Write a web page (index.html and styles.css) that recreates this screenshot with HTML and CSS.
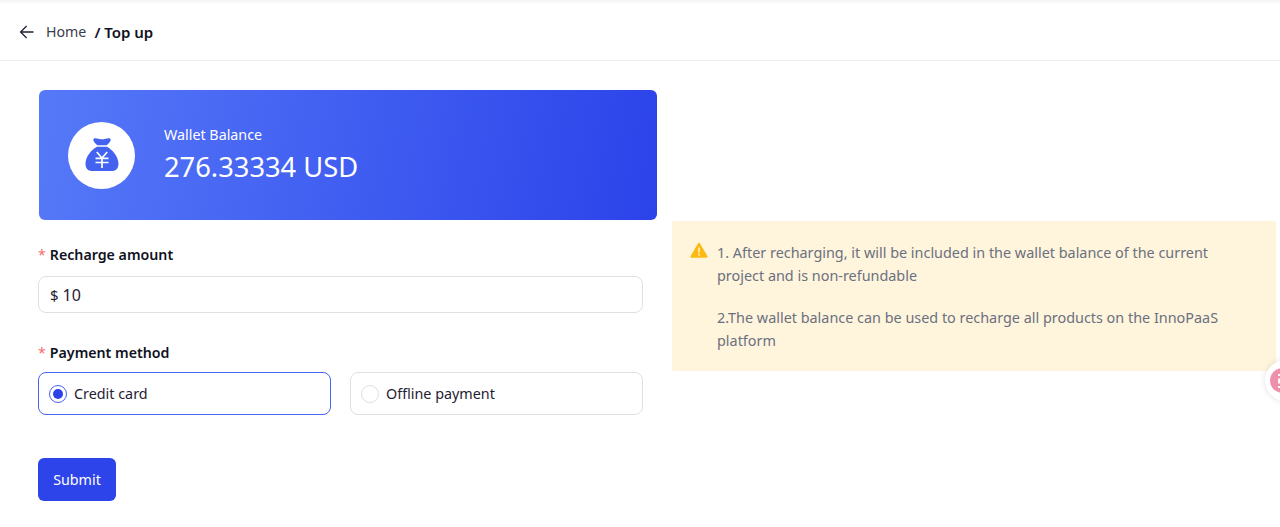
FILE: index.html
```html
<!DOCTYPE html>
<html lang="en">
<head>
  <meta charset="UTF-8" />
  <title>Top up</title>
  <link rel="stylesheet" href="styles.css">
</head>
<body>
  <div class="topbar"></div>
  <div class="header">
    <svg class="back" width="16" height="16" viewBox="0 0 16 16"><path d="M14.5 8H1.8M7.6 2 1.6 8l6 6" fill="none" stroke="#1f2133" stroke-width="1.3"/></svg>
    <span class="crumb">Home</span>
    <span class="crumb-current">/ Top up</span>
  </div>
  <div class="main">
    <div class="left">
      <div class="balance">
        <div class="balance-icon">
          <svg width="36" height="36" viewBox="0 0 36 36">
            <path d="M10 1.500c2-1 5 .8 8 .8s6-1.800 8-.8c1.200.7.6 2.500-.4 3.800-1 1.200-2 2.300-3 3H13.400c-1-.7-2-1.800-3-3-1-1.300-1.600-3.100-.4-3.800z" fill="#4262ef"/>
            <path d="M13 9.800h10c5.500 3 11.500 10 11.500 17 0 4.300-2.400 7.200-6 7.200H7.500c-3.600 0-6-2.900-6-7.200 0-7 6-14 11.500-17z" fill="#4262ef"/>
            <path d="M12.800 15 18 21l5.200-6M11.500 21.300h13M11.500 25.500h13M18 21v10" fill="none" stroke="#fff" stroke-width="1.700"/>
          </svg>
        </div>
        <div class="balance-text">
          <div class="balance-label">Wallet Balance</div>
          <div class="balance-value">276.33334 USD</div>
        </div>
      </div>

      <div class="field amount-field">
        <div class="field-label"><span class="req">*</span>Recharge amount</div>
        <div class="amount-input"><span class="dollar">$</span><span class="amount">10</span></div>
      </div>

      <div class="field method-field">
        <div class="field-label"><span class="req">*</span>Payment method</div>
        <div class="methods">
          <div class="method selected"><span class="radio"></span>Credit card</div>
          <div class="method"><span class="radio"></span>Offline payment</div>
        </div>
      </div>

      <button class="submit">Submit</button>
    </div>

    <div class="notice">
      <svg class="notice-icon" width="18" height="16" viewBox="0 0 18 16"><path d="M9 .8c.4 0 .7.2.9.5l7.600 13c.4.7 0 1.400-.8 1.400H1.300c-.8 0-1.200-.7-.8-1.400l7.600-13c.2-.3.5-.5.9-.5z" fill="#fdb913"/><path d="M9 5.500v5M9 11.800v1.600" stroke="#fff3d6" stroke-width="1.500"/></svg>
      <div class="notice-text">
        <p>1. After recharging, it will be included in the wallet balance of the current project and is non-refundable</p>
        <p>2.The wallet balance can be used to recharge all products on the InnoPaaS platform</p>
      </div>
    </div>
  </div>
  <div class="float-btn">
    <svg class="float-dot" width="25" height="25" viewBox="0 0 25 25">
      <circle cx="12.500" cy="12.500" r="12.500" fill="#ee8fab"/>
      <path d="M8 7h5.500v4.500H9v3h4.500V19H8" fill="none" stroke="#fff" stroke-width="1.800"/>
    </svg>
  </div>
</body>
</html>
```

FILE: styles.css
```css
/* Base styles */
html, body {
  height: 100%;
}
body {
  margin: 0;
  font-family: "Noto Sans", "Open Sans", sans-serif;
  font-size: 14.35px;
  color: #1f2133;
  background-color: #fff;
  overflow: hidden;
  position: relative;
}
.topbar {
  height: 3px;
  background: linear-gradient(#f2f2f3, #fafafa);
}
.header {
  height: 58px;
  display: flex;
  align-items: center;
  padding-left: 19px;
  border-bottom: 1px solid #eeeff1;
  box-sizing: border-box;
}
.back {
  margin-right: 11px;
}
.crumb {
  color: #3a3c4e;
  margin-right: 8px;
  font-size: 14.2px;
}
.crumb-current {
  font-weight: 600;
  font-size: 15px;
  color: #0f1222;
}

/* Page columns */
.main {
  display: flex;
  padding: 29px 4px 0 38px;
}
.left {
  width: 619px;
  flex-shrink: 0;
}
.balance {
  width: 618px;
  height: 130px;
  margin-left: 1px;
  box-sizing: border-box;
  border-radius: 6px;
  background: linear-gradient(100deg, #5679f8, #2b43ea);
  color: white;
  display: flex;
  align-items: center;
  padding-left: 29px;
}
.balance-icon {
  width: 67px;
  height: 67px;
  border-radius: 50%;
  background-color: white;
  display: flex;
  align-items: center;
  justify-content: center;
  margin-right: 29px;
}
.balance-label {
  font-size: 14.3px;
  line-height: 20px;
  margin-top: 1px;
}
.balance-value {
  font-size: 27.3px;
  line-height: 38px;
  margin-top: 3px;
}

/* Form */
.field {
  width: 605px;
}
.amount-field {
  margin-top: 24px;
}
.method-field {
  margin-top: 29px;
}
.field-label {
  font-weight: 600;
  font-size: 14.2px;
  line-height: 22px;
  color: #0f1222;
  margin-bottom: 10px;
}
.req {
  color: #f56c6c;
  font-weight: 400;
  margin-right: 4px;
}
.amount-input {
  height: 37px;
  box-sizing: border-box;
  border: 1px solid #dfe0e3;
  border-radius: 8px;
  display: flex;
  align-items: center;
  padding: 1px 0 0 11px;
}
.dollar {
  font-size: 15px;
  margin-right: 4px;
}
.amount {
  font-size: 16px;
}
.methods {
  display: flex;
  gap: 19px;
  margin-top: -2px;
}
.method {
  width: 293px;
  height: 43px;
  box-sizing: border-box;
  border: 1px solid #dfe0e3;
  border-radius: 8px;
  display: flex;
  align-items: center;
  padding-left: 10px;
}
.method.selected {
  border-color: #4763f0;
}
.radio {
  width: 18px;
  height: 18px;
  box-sizing: border-box;
  border: 1px solid #dfe0e3;
  border-radius: 50%;
  margin-right: 7px;
  display: flex;
  align-items: center;
  justify-content: center;
}
.selected .radio {
  border-color: #4763f0;
}
.selected .radio::after {
  content: "";
  width: 10px;
  height: 10px;
  border-radius: 50%;
  background-color: #2b43ea;
}
.submit {
  display: block;
  margin-top: 43px;
  width: 78px;
  height: 43px;
  border: none;
  border-radius: 6px;
  background-color: #2d44ea;
  color: white;
  font-family: inherit;
  font-size: 14.3px;
}

/* Notice on the right */
.notice {
  flex: 1;
  margin: 131px 0 0 15px;
  height: 150px;
  box-sizing: border-box;
  background-color: #fff5dc;
  border-radius: 2px;
  padding: 20px 40px 0 18px;
  display: flex;
  font-size: 14.4px;
  color: #6b7080;
}
.notice-icon {
  flex-shrink: 0;
  margin-right: 9px;
  margin-top: 1px;
}
.notice-text p {
  margin: 0 0 19px;
  line-height: 23px;
}

/* Floating helper at the window edge */
.float-btn {
  position: absolute;
  left: 1265px;
  top: 360px;
  width: 41px;
  height: 41px;
  padding-left: 5px;
  box-sizing: border-box;
  border-radius: 50%;
  background-color: white;
  box-shadow: 0 0 6px rgba(0, 0, 0, 0.12);
  display: flex;
  align-items: center;
}
.float-dot {
  flex-shrink: 0;
}
```
